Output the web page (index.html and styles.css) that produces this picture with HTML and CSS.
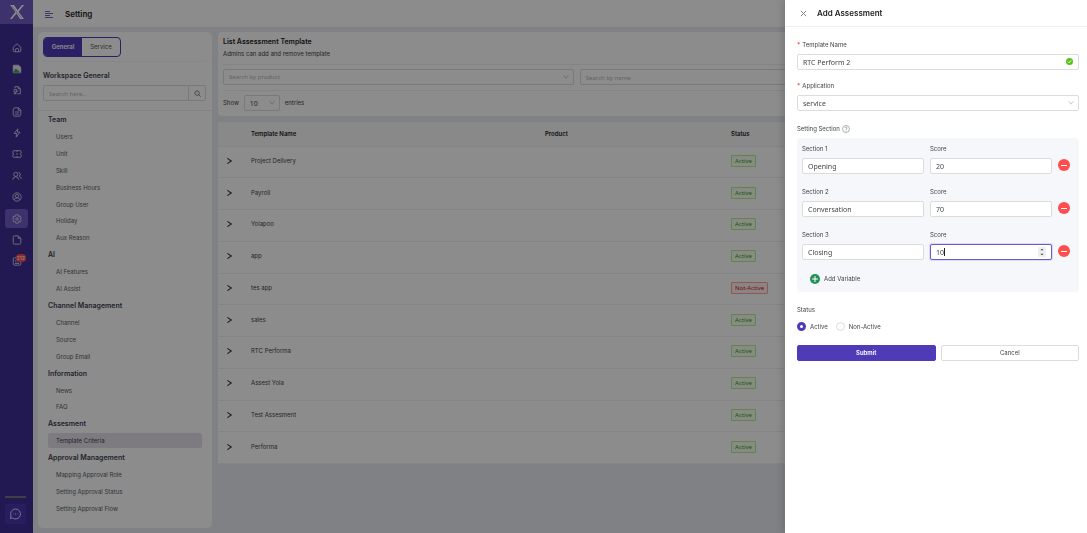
FILE: index.html
```
<!DOCTYPE html>
<html lang="en">
<head>
  <meta charset="UTF-8" />
  <meta name="viewport" content="width=device-width, initial-scale=1.0"/>
  <title>Setting</title>
  <link rel="stylesheet" href="styles.css">
</head>
<body>

  <div class="app">
    <!-- Icon rail -->
    <aside class="rail">
      <a class="logo" href="#" aria-label="Home page">
        <svg viewBox="0 0 16 16" width="16" height="16"><path d="M1 1h4l3.600 5.200L13 1h2L9.600 7.700 15 15h-4L7.400 9.600 3 15H1l5.400-6.900z" fill="#fff"/><path d="M3 2l9.500 12" stroke="#6f5cc4" stroke-width=".5"/></svg>
      </a>
      <nav class="rail-nav">
        <a href="#" aria-label="Dashboard"><svg viewBox="0 0 24 24"><path d="M3 10l9-8 9 8v8q0 3-3 3H6q-3 0-3-3z"/><path d="M8 21v-4q0-4 4-4t4 4v4"/></svg></a>
        <a href="#" aria-label="Image"><svg viewBox="0 0 24 24"><path d="M3 3h13l5 5v13H3z" fill="#dfe6f2"/><path d="M3 19l6-8 12 10H3z" fill="#4f9a4f" stroke="none"/></svg></a>
        <a href="#" aria-label="Task"><svg viewBox="0 0 24 24"><path d="M7 8V4h8l5 5v12h-7M15 4v5h5M5 11h6v6H5zM8 17v4M4 21h7M15 13l-2 3"/></svg></a>
        <a href="#" aria-label="Notes"><svg viewBox="0 0 24 24"><path d="M7 2h9l5 5v11q0 4-4 4H7q-4 0-4-4V6q0-4 4-4zM15 2v6h6M7 12h10M7 17h10"/></svg></a>
        <a href="#" aria-label="Automation"><svg viewBox="0 0 24 24"><path d="M14 2L5 13h6l-1 9 9-12h-6z"/></svg></a>
        <a href="#" aria-label="Ticket"><svg viewBox="0 0 24 24"><path d="M5 4h14q3 0 3 3v2q-3 3 0 6v2q0 3-3 3H5q-3 0-3-3v-2q3-3 0-6V7q0-3 3-3zM12 4v3M12 10v4M12 17v3"/></svg></a>
        <a href="#" aria-label="Contacts"><svg viewBox="0 0 24 24"><circle cx="9" cy="8" r="5"/><path d="M2 21q0-7 7-7t7 7M16 4q4 0 4 4t-3 4q5 2 5 7"/></svg></a>
        <a href="#" aria-label="Account"><svg viewBox="0 0 24 24"><circle cx="12" cy="12" r="10"/><circle cx="12" cy="10" r="4"/><path d="M6 19v-2q1-3 6-3t6 3v2"/></svg></a>
        <a class="active" href="#" aria-label="Setting"><svg viewBox="0 0 24 24"><circle cx="12" cy="12" r="3"/><path d="M9 2h6l1 4 4-1 2 5-3 2 3 3-2 4-4-1-1 4H9l-1-4-4 1-2-4 3-3-3-2 2-5 4 1z"/></svg></a>
        <a href="#" aria-label="Document"><svg viewBox="0 0 24 24"><path d="M6 2h9l6 6v11q0 3-3 3H6q-3 0-3-3V5q0-3 3-3zM15 2v6h6"/></svg></a>
        <a href="#" aria-label="Inbox"><svg viewBox="0 0 24 24"><path d="M6 4h12q3 0 3 3v12q0 3-3 3H6q-3 0-3-3V7q0-3 3-3zM7 10h2M11 10h2M7 14h2M11 14h2M15 14h2M7 18h10"/></svg><span class="badge">212</span></a>
      </nav>
      <a class="chat" href="#" aria-label="Chat"><svg viewBox="0 0 24 24"><path d="M12 2a10 10 0 1 1-6 18l-4 1 1-5A10 10 0 0 1 12 2zM7 12h1M11 12h2M16 12h1"/></svg></a>
    </aside>

    <div class="page">
      <header class="topbar">
        <button class="menu-toggle" type="button" aria-label="Toggle menu"><svg viewBox="0 0 8 8" width="8" height="8"><path d="M0 1.500h5M0 3.500h8M0 5.500h5M0 7.500h8" stroke="#4f3bb8" stroke-width=".8"/></svg></button>
        <h1>Setting</h1>
      </header>

      <div class="content">
        <section class="side-panel">
          <div class="tabs-wrap">
            <div class="tabs">
              <button class="tab active" type="button">General</button>
              <button class="tab" type="button">Service</button>
            </div>
          </div>
          <div class="workspace">
            <h2>Workspace General</h2>
            <form class="search">
              <input type="text" placeholder="Search here.." aria-label="Search here">
              <button type="button" aria-label="Search"><svg viewBox="0 0 16 16" width="7" height="7"><circle cx="7" cy="7" r="5"/><path d="M11 11l4 4"/></svg></button>
            </form>
          </div>
          <nav class="menu">
            <h3>Team</h3>
            <a href="#">Users</a>
            <a href="#">Unit</a>
            <a href="#">Skill</a>
            <a href="#">Business Hours</a>
            <a href="#">Group User</a>
            <a href="#">Holiday</a>
            <a href="#">Aux Reason</a>
            <h3>AI</h3>
            <a href="#">AI Features</a>
            <a href="#">AI Assist</a>
            <h3>Channel Management</h3>
            <a href="#">Channel</a>
            <a href="#">Source</a>
            <a href="#">Group Email</a>
            <h3>Information</h3>
            <a href="#">News</a>
            <a href="#">FAQ</a>
            <h3>Assesment</h3>
            <a class="active" href="#">Template Criteria</a>
            <h3>Approval Management</h3>
            <a href="#">Mapping Approval Role</a>
            <a href="#">Setting Approval Status</a>
            <a href="#">Setting Approval Flow</a>
          </nav>
        </section>

        <main class="main">
          <section class="card">
            <h2>List Assessment Template</h2>
            <p>Admins can add and remove template</p>
            <div class="filters">
              <div class="select-wrap">
                <select class="muted" aria-label="Search by product"><option>Search by product</option></select>
                <svg class="chevron" viewBox="0 0 10 10"><path d="M1 2l4 5 4-5"/></svg>
              </div>
              <input type="text" placeholder="Search by name" aria-label="Search by name">
            </div>
            <div class="entries">
              <label for="entries">Show</label>
              <div class="select-wrap">
                <select id="entries"><option>10</option></select>
                <svg class="chevron" viewBox="0 0 10 10"><path d="M1 2l4 5 4-5"/></svg>
              </div>
              <span>entries</span>
            </div>
          </section>

          <table class="list">
            <thead>
              <tr><th class="col-expand"></th><th class="col-name">Template Name</th><th class="col-product">Product</th><th>Status</th></tr>
            </thead>
            <tbody>
              <tr><td><button type="button" aria-label="Expand"><svg viewBox="0 0 6 6"><path d="M1 1l3 2-3 2"/></svg></button></td><td>Project Delivery</td><td></td><td><span class="tag">Active</span></td></tr>
              <tr><td><button type="button" aria-label="Expand"><svg viewBox="0 0 6 6"><path d="M1 1l3 2-3 2"/></svg></button></td><td>Payroll</td><td></td><td><span class="tag">Active</span></td></tr>
              <tr><td><button type="button" aria-label="Expand"><svg viewBox="0 0 6 6"><path d="M1 1l3 2-3 2"/></svg></button></td><td>Yolapoo</td><td></td><td><span class="tag">Active</span></td></tr>
              <tr><td><button type="button" aria-label="Expand"><svg viewBox="0 0 6 6"><path d="M1 1l3 2-3 2"/></svg></button></td><td>app</td><td></td><td><span class="tag">Active</span></td></tr>
              <tr><td><button type="button" aria-label="Expand"><svg viewBox="0 0 6 6"><path d="M1 1l3 2-3 2"/></svg></button></td><td>tes app</td><td></td><td><span class="tag red">Not-Active</span></td></tr>
              <tr><td><button type="button" aria-label="Expand"><svg viewBox="0 0 6 6"><path d="M1 1l3 2-3 2"/></svg></button></td><td>sales</td><td></td><td><span class="tag">Active</span></td></tr>
              <tr><td><button type="button" aria-label="Expand"><svg viewBox="0 0 6 6"><path d="M1 1l3 2-3 2"/></svg></button></td><td>RTC Performa</td><td></td><td><span class="tag">Active</span></td></tr>
              <tr><td><button type="button" aria-label="Expand"><svg viewBox="0 0 6 6"><path d="M1 1l3 2-3 2"/></svg></button></td><td>Assest Yola</td><td></td><td><span class="tag">Active</span></td></tr>
              <tr><td><button type="button" aria-label="Expand"><svg viewBox="0 0 6 6"><path d="M1 1l3 2-3 2"/></svg></button></td><td>Test Assesment</td><td></td><td><span class="tag">Active</span></td></tr>
              <tr><td><button type="button" aria-label="Expand"><svg viewBox="0 0 6 6"><path d="M1 1l3 2-3 2"/></svg></button></td><td>Performa</td><td></td><td><span class="tag">Active</span></td></tr>
            </tbody>
          </table>
        </main>
      </div>
    </div>
  </div>

  <div class="mask"></div>

  <!-- Add assessment drawer -->
  <aside class="drawer">
    <header class="drawer-header">
      <button type="button" aria-label="Close"><svg viewBox="0 0 8 8" width="7" height="7"><path d="M1 1l6 6M7 1L1 7"/></svg></button>
      <h2>Add Assessment</h2>
    </header>

    <form class="drawer-body">
      <div class="field">
        <label class="required" for="template-name">Template Name</label>
        <div class="select-wrap">
          <input id="template-name" type="text" value="RTC Perform 2">
          <svg class="valid" viewBox="0 0 16 16"><circle cx="8" cy="8" r="8" fill="#52c41a"/><path d="M4 8l3 3 5-6" fill="none" stroke="#fff" stroke-width="2"/></svg>
        </div>
      </div>
      <div class="field">
        <label class="required" for="application">Application</label>
        <div class="select-wrap">
          <select id="application"><option>service</option></select>
          <svg class="chevron" viewBox="0 0 10 10"><path d="M1 2l4 5 4-5"/></svg>
        </div>
      </div>

      <div class="section-title">Setting Section
        <svg viewBox="0 0 16 16" width="8" height="8"><circle cx="8" cy="8" r="7"/><path d="M6 6q0-2 2-2t2 2-2 3v1M8 11v2"/></svg>
      </div>
      <div class="sections">
        <div class="section-row">
          <div class="field"><label for="s1">Section 1</label><input id="s1" type="text" value="Opening"></div>
          <div class="field"><label for="p1">Score</label><input id="p1" type="number" value="20"></div>
          <button class="remove" type="button" aria-label="Remove section 1"></button>
        </div>
        <div class="section-row">
          <div class="field"><label for="s2">Section 2</label><input id="s2" type="text" value="Conversation"></div>
          <div class="field"><label for="p2">Score</label><input id="p2" type="number" value="70"></div>
          <button class="remove" type="button" aria-label="Remove section 2"></button>
        </div>
        <div class="section-row">
          <div class="field"><label for="s3">Section 3</label><input id="s3" type="text" value="Closing"></div>
          <div class="field">
            <label for="p3">Score</label>
            <div class="select-wrap focused">
              <input id="p3" type="number" value="10">
              <svg class="spinner" viewBox="0 0 8 12"><path d="M2 4l2-2 2 2zM2 8l2 2 2-2z"/></svg>
            </div>
          </div>
          <button class="remove" type="button" aria-label="Remove section 3"></button>
        </div>
        <button class="add" type="button">
          <svg viewBox="0 0 10 10" width="10" height="10"><circle cx="5" cy="5" r="5" fill="#1f9254"/><path d="M2 5h6M5 2v6" stroke="#fff"/></svg>
          Add Variable
        </button>
      </div>

      <fieldset class="status">
        <legend>Status</legend>
        <label><input type="radio" name="status" checked>Active</label>
        <label><input type="radio" name="status">Non-Active</label>
      </fieldset>

      <div class="actions">
        <button class="primary" type="button">Submit</button>
        <button type="button">Cancel</button>
      </div>
    </form>
  </aside>

</body>
</html>
```
FILE: styles.css
```
* {
  margin: 0;
  padding: 0;
  box-sizing: border-box;
}

body {
  font-family: Inter, sans-serif;
  font-size: 6px;
  line-height: 8px;
  color: #444;
  background-color: #e9ebf1;
  overflow: hidden;
}

a {
  color: inherit;
  text-decoration: none;
}

button {
  font: inherit;
  color: inherit;
  background: none;
  border: none;
}

svg {
  display: block;
}

input,
select {
  width: 100%;
  height: 16px;
  padding: 0 5px;
  font-family: "Noto Sans", sans-serif;
  font-size: 7px;
  color: #444;
  background-color: #fff;
  border: 1px solid #dcdcdc;
  border-radius: 2px;
  outline: none;
  appearance: none;
}

input[type="number"] {
  appearance: textfield;
}

input::placeholder,
.muted {
  color: #b5b5b5;
  font-size: 6px;
}

.select-wrap {
  position: relative;
}

.chevron {
  position: absolute;
  top: 5px;
  right: 5px;
  width: 6px;
  height: 6px;
  fill: none;
  stroke: #aaa;
}

.app {
  display: flex;
  height: 100vh;
}

/* Icon rail */
.rail {
  width: 33px;
  background-color: #402f96;
  display: flex;
  flex-direction: column;
  flex-shrink: 0;
}

.rail svg {
  fill: none;
  stroke: #dcd8f2;
  stroke-width: 2;
}

.rail .logo svg {
  stroke: none;
}

.logo {
  height: 24px;
  background-color: #6f5cc4;
  display: flex;
  align-items: center;
  justify-content: center;
}

.rail-nav {
  height: 247px;
  display: flex;
  flex-direction: column;
  justify-content: space-between;
  padding: 14px 5px 0;
}

.rail-nav a {
  height: 19px;
  display: flex;
  align-items: center;
  justify-content: center;
  border-radius: 3px;
  position: relative;
}

.rail-nav svg {
  width: 10px;
  height: 10px;
}

.rail-nav .active {
  background-color: #6f5cc4;
}

.badge {
  position: absolute;
  top: 2px;
  right: 2px;
  padding: 0 1px;
  font-size: 5px;
  line-height: 8px;
  color: #fff;
  background-color: #ff4d4f;
  border-radius: 4px;
}

.chat {
  margin: auto 7px 9px 5px;
  border-top: 2px solid #77747f;
  padding-top: 6px;
}

.chat svg {
  width: 21px;
  height: 20px;
  padding: 4px;
  background-color: #4a36b0;
  border-radius: 3px;
}

/* Page */
.page {
  flex: 1;
  min-width: 0;
  display: flex;
  flex-direction: column;
}

.topbar {
  height: 27px;
  padding: 0 12px;
  display: flex;
  align-items: center;
  gap: 12px;
  background-color: #fff;
}

h1,
.drawer-header h2 {
  font-size: 8px;
  font-weight: 600;
  color: #222;
}

.content {
  flex: 1;
  display: flex;
  gap: 6px;
  padding: 5px;
}

.side-panel {
  width: 174px;
  display: flex;
  flex-direction: column;
  flex-shrink: 0;
  background-color: #fff;
  border-radius: 5px;
}

.tabs-wrap {
  padding: 5px 5px 4px;
  border-bottom: 1px solid #f6f6f6;
  border-radius: 10px;
}

.tabs {
  width: 78px;
  height: 20px;
  display: flex;
  border: 1px solid #4f3bb8;
  border-radius: 4px;
  overflow: hidden;
}

.tab {
  flex: 1;
  color: #555;
}

.tab.active {
  color: #fff;
  font-weight: 600;
  background-color: #4f3bb8;
}

.workspace {
  padding: 10px 6px 9px 5px;
  border-bottom: 1px solid #ededed;
}

.side-panel h2,
.side-panel h3 {
  font-size: 7px;
  font-weight: 600;
  color: #3a4250;
}

.search {
  display: flex;
  margin-top: 5px;
}

.search input {
  border-radius: 2px 0 0 2px;
}

.search button {
  width: 17px;
  display: flex;
  align-items: center;
  justify-content: center;
  flex-shrink: 0;
  border: 1px solid #dcdcdc;
  border-left: none;
  border-radius: 0 2px 2px 0;
}

.search svg {
  fill: none;
  stroke: #777;
  stroke-width: 2;
}

.menu {
  flex: 1;
  display: flex;
  flex-direction: column;
  justify-content: space-between;
  padding: 1px 10px 12px;
}

.menu a,
.menu h3 {
  line-height: 15px;
}

.menu a {
  padding-left: 8px;
  color: #555d69;
  border-radius: 2px;
}

.menu .active {
  color: #3a4250;
  background-color: #e4e0ea;
}

.main {
  flex: 1;
  min-width: 0;
}

.card {
  padding: 6px 5px 5px;
  background-color: #fff;
  border-radius: 4px;
}

.card h2 {
  font-size: 7px;
  font-weight: 600;
  color: #222;
}

.card p {
  margin-top: 4px;
  padding-bottom: 6px;
}

.filters {
  display: grid;
  grid-template-columns: 5fr 5fr 2fr;
  gap: 6px;
  padding: 4px 0 5px;
  border-top: 1px solid #f0f0f0;
  border-bottom: 1px solid #f0f0f0;
}

.entries {
  display: flex;
  align-items: center;
  gap: 5px;
  margin-top: 4px;
}

.entries .select-wrap {
  width: 36px;
}

/* Template table */
.list {
  width: 100%;
  height: 342px;
  margin-top: 6px;
  table-layout: fixed;
  border-collapse: collapse;
  background-color: #fff;
}

.list th {
  height: 24px;
  text-align: left;
  font-weight: 600;
  color: #222;
  background-color: #fafafa;
}

.list th,
.list td {
  padding: 0 8px;
  border-bottom: 1px solid #f0f0f0;
}

.list td {
  padding-bottom: 2px;
}

.col-expand {
  width: 25px;
}

.col-name {
  width: 294px;
}

.col-product {
  width: 186px;
}

.list button {
  display: block;
}

.list svg {
  width: 8px;
  height: 8px;
  fill: none;
  stroke: #333;
  stroke-width: .8;
}

.tag {
  display: inline-block;
  padding: 1px 3px;
  font-family: "Noto Sans", sans-serif;
  color: #389e0d;
  background-color: #f6ffed;
  border: 1px solid #b7eb8f;
  border-radius: 1px;
}

.tag.red {
  color: #cf1322;
  background-color: #fff1f0;
  border-color: #ffa39e;
}

.mask {
  position: fixed;
  inset: 0;
  background-color: rgba(0, 0, 0, 0.45);
}

/* Drawer */
.drawer {
  position: fixed;
  top: 0;
  right: 0;
  bottom: 0;
  width: 302px;
  background-color: #fff;
  box-shadow: -3px 0 8px rgba(0, 0, 0, 0.15);
}

.drawer-header {
  height: 27px;
  padding: 0 15px;
  display: flex;
  align-items: center;
  gap: 10px;
  border-bottom: 1px solid #f0f0f0;
}

.drawer-header svg {
  fill: none;
  stroke: #777;
}

.drawer-body {
  padding: 14px 8px 0 12px;
}

.field label {
  display: block;
  margin-bottom: 5px;
}

.drawer-body > .field {
  margin-bottom: 12px;
}

.required::before {
  content: "*";
  margin-right: 2px;
  font-weight: 700;
  color: #ff4d4f;
}

.valid {
  position: absolute;
  top: 4px;
  right: 6px;
  width: 7px;
  height: 7px;
}

.section-title {
  display: flex;
  align-items: center;
  gap: 2px;
  margin-top: 14px;
  margin-bottom: 5px;
}

.section-title svg {
  fill: none;
  stroke: #666;
}

.sections {
  padding: 7px 5px 8px;
  background-color: #f5f7fb;
  border-radius: 3px;
}

.section-row {
  display: grid;
  grid-template-columns: 1fr 1fr 16px;
  column-gap: 6px;
  margin-bottom: 14px;
}

.remove {
  align-self: end;
  width: 12px;
  height: 12px;
  margin-bottom: 3px;
  background-color: #ff4d4f;
  border-radius: 6px;
}

.remove::before {
  content: "";
  display: block;
  width: 6px;
  height: 1px;
  margin: 0 auto;
  background-color: #fff;
}

.focused input {
  border-color: #6b5bc8;
  box-shadow: 0 0 0 1px #dcd8f5;
}

/* text cursor */
.focused::after {
  content: "";
  position: absolute;
  top: 4px;
  left: 14px;
  width: 1px;
  height: 8px;
  background-color: #222;
}

.spinner {
  position: absolute;
  top: 3px;
  right: 6px;
  width: 8px;
  height: 10px;
  background-color: #efefef;
  fill: #444;
}

.add {
  display: flex;
  align-items: center;
  gap: 4px;
  margin-left: 8px;
}

.status {
  display: flex;
  gap: 8px;
  margin-top: 14px;
  border: none;
}

.status legend {
  margin-bottom: 8px;
}

.status label {
  display: flex;
  align-items: center;
  gap: 4px;
}

.status input {
  width: 9px;
  height: 9px;
  padding: 0;
  border-radius: 5px;
}

.status input:checked {
  border: 3px solid #4f3bb8;
}

.actions {
  display: grid;
  grid-template-columns: 1fr 1fr;
  gap: 5px;
  margin-top: 14px;
}

.actions button {
  height: 16px;
  border: 1px solid #dcdcdc;
  border-radius: 2px;
}

.actions .primary {
  color: #fff;
  font-weight: 600;
  background-color: #4f3bb8;
  border-color: #4f3bb8;
}
```
